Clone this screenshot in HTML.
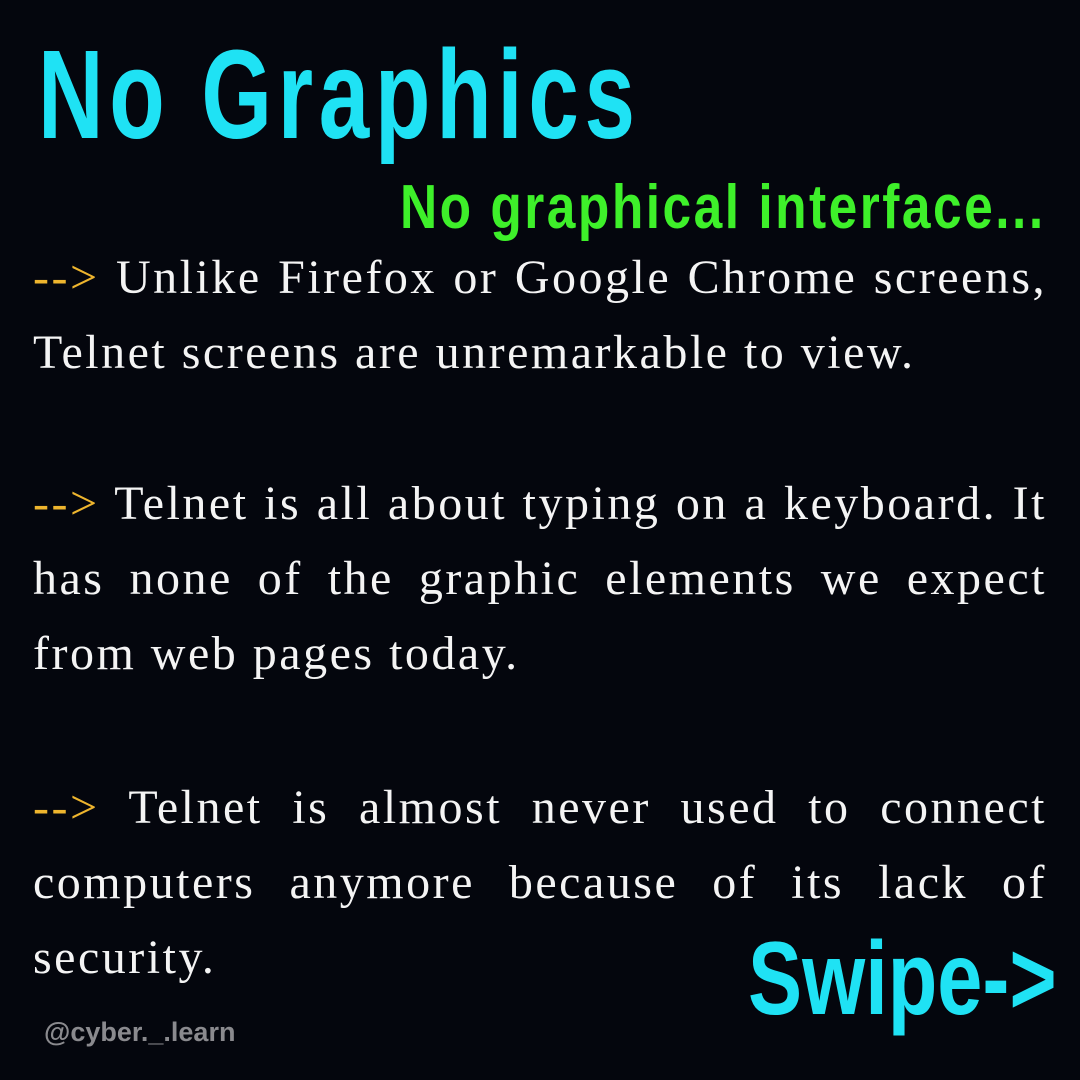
<!DOCTYPE html>
<html><head><meta charset="utf-8"><style>
body{margin:0;width:1080px;height:1080px;background:#04060d;overflow:hidden;position:relative}
.t{position:absolute;left:38px;top:22px;font:bold 126px "Liberation Sans Narrow","Liberation Sans",sans-serif;color:#1fe2f4;transform:scaleX(0.72);transform-origin:left top;letter-spacing:8px;white-space:nowrap}
.s{position:absolute;left:400px;top:172px;font:bold 62px "Liberation Sans Narrow","Liberation Sans",sans-serif;color:#3ef02a;transform:scaleX(0.83);transform-origin:left top;white-space:nowrap;letter-spacing:3px}
.p{position:absolute;left:33px;width:1014px;font:48px/75px "Liberation Serif",serif;color:#f4f4f4;letter-spacing:2.5px}
.p div{white-space:nowrap;text-align:justify;text-align-last:justify}
.p div.l{text-align-last:left}
.a{color:#eeb52e}
.sw{position:absolute;left:748px;top:920px;font:bold 104px "Liberation Sans Narrow","Liberation Sans",sans-serif;color:#1fe2f4;transform:scaleX(0.78);transform-origin:left top;white-space:nowrap}
.w{position:absolute;left:44px;top:1017px;font:bold 27px "Liberation Sans",sans-serif;color:#8a8a8e}
</style></head><body>
<div class="t">No Graphics</div>
<div class="s">No graphical interface...</div>
<div class="p" style="top:240px"><div><span class="a">--&gt;</span> Unlike Firefox or Google Chrome screens,</div><div class="l">Telnet screens are unremarkable to view.</div></div>
<div class="p" style="top:466px"><div><span class="a">--&gt;</span> Telnet is all about typing on a keyboard. It</div><div>has none of the graphic elements we expect</div><div class="l">from web pages today.</div></div>
<div class="p" style="top:770px"><div><span class="a">--&gt;</span> Telnet is almost never used to connect</div><div>computers anymore because of its lack of</div><div class="l">security.</div></div>
<div class="sw">Swipe-&gt;</div>
<div class="w">@cyber._.learn</div>
</body></html>
